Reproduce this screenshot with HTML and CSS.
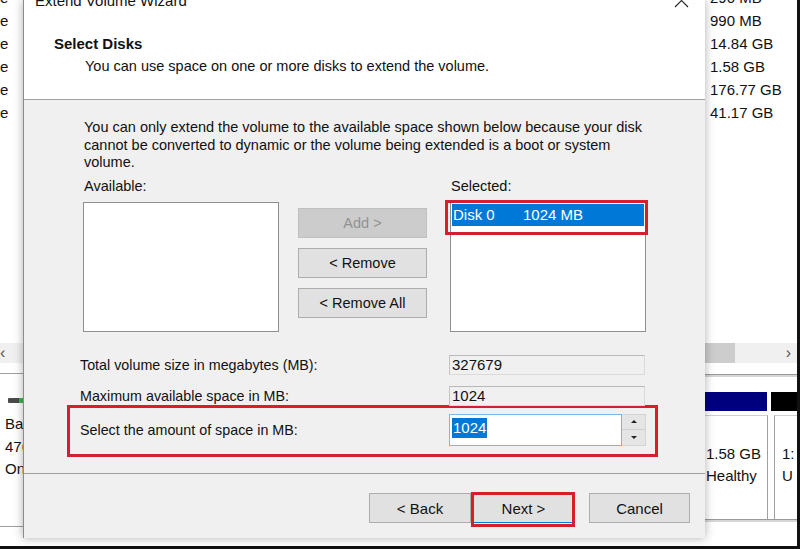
FILE: index.html
```html
<!DOCTYPE html>
<html lang="en">
<head>
    <meta charset="UTF-8">
    <title>Extend Volume Wizard</title>
    <link rel="stylesheet" href="styles.css">
</head>
<body>

<div class="screen">

    <!-- Disk Management, left edge peeking out behind the wizard -->
    <div class="mgmt mgmt-left">
        <div class="vol-col">
            <span>e</span>
            <span>e</span>
            <span>e</span>
            <span>e</span>
            <span>e</span>
            <span>e</span>
        </div>
        <div class="hscroll hscroll-left"><span class="arrow">&lsaquo;</span></div>
        <div class="rule"></div>
        <div class="disk-icon"><span></span></div>
        <div class="disk-info">
            <span>Basic</span>
            <span>476.92 GB</span>
            <span>Online</span>
        </div>
        <div class="rule rule-bottom"></div>
    </div>

    <!-- Wizard dialog -->
    <div class="wizard">
        <div class="titlebar">
            <span class="title">Extend Volume Wizard</span>
            <svg class="close" width="15" height="15" viewBox="0 0 15 15">
                <path d="M1 1 L14 14 M14 1 L1 14" stroke="#222" stroke-width="1.1" fill="none"/>
            </svg>
        </div>

        <div class="wiz-head">
            <h1>Select Disks</h1>
            <p>You can use space on one or more disks to extend the volume.</p>
        </div>

        <div class="wiz-body">
            <p class="note">
                You can only extend the volume to the available space shown below because your disk<br>
                cannot be converted to dynamic or the volume being extended is a boot or system<br>
                volume.
            </p>

            <div class="pickers">
                <div class="picker">
                    <div class="picker-label">Available:</div>
                    <div class="listbox"></div>
                </div>
                <div class="move-buttons">
                    <button class="btn" disabled>Add &gt;</button>
                    <button class="btn">&lt; Remove</button>
                    <button class="btn">&lt; Remove All</button>
                </div>
                <div class="picker picker-selected">
                    <div class="picker-label">Selected:</div>
                    <div class="listbox">
                        <div class="list-item">
                            <span class="disk-name">Disk 0</span>
                            <span>1024 MB</span>
                        </div>
                    </div>
                    <div class="callout callout-disk"></div>
                </div>
            </div>

            <div class="field-rows">
                <div class="field-row">
                    <label>Total volume size in megabytes (MB):</label>
                    <div class="field">327679</div>
                </div>
                <div class="field-row">
                    <label>Maximum available space in MB:</label>
                    <div class="field">1024</div>
                </div>
                <div class="field-row field-row-marked">
                    <label>Select the amount of space in MB:</label>
                    <div class="spinner">
                        <div class="spin-input"><span class="sel-text">1024</span></div>
                        <div class="spin-buttons">
                            <div class="spin-btn spin-up"></div>
                            <div class="spin-btn spin-down"></div>
                        </div>
                    </div>
                </div>
            </div>
        </div>

        <div class="wiz-foot">
            <button class="btn btn-back">&lt; Back</button>
            <div class="next-wrap">
                <button class="btn btn-default">Next &gt;</button>
                <div class="callout callout-next"></div>
            </div>
            <button class="btn btn-cancel">Cancel</button>
        </div>
    </div>

    <!-- Disk Management, right edge -->
    <div class="mgmt mgmt-right">
        <div class="size-col">
            <span>290 MB</span>
            <span>990 MB</span>
            <span>14.84 GB</span>
            <span>1.58 GB</span>
            <span>176.77 GB</span>
            <span>41.17 GB</span>
        </div>
        <div class="hscroll hscroll-right">
            <span class="thumb"></span>
            <span class="arrow">&rsaquo;</span>
        </div>
        <div class="rule rule-double"></div>
        <div class="part-bars">
            <span class="bar-primary"></span>
            <span class="bar-unalloc"></span>
        </div>
        <div class="parts">
            <div class="part part-a">
                <span>1.58 GB</span>
                <span>Healthy</span>
            </div>
            <div class="part part-b">
                <span>1:</span>
                <span>U</span>
            </div>
        </div>
        <div class="rule rule-double"></div>
    </div>

</div>

</body>
</html>
```

FILE: styles.css
```css
* {
    box-sizing: border-box;
}
body {
    margin: 0;
    font-family: 'Liberation Sans', Arial, sans-serif;
    color: #111;
}
.screen {
    width: 800px;
    height: 549px;
    display: grid;
    grid-template-columns: 23px 682px 1fr;
    background: #fff;
    border-right: 3px solid #111;
    border-bottom: 3px solid #111;
    overflow: hidden;
}

/* background window */
.mgmt {
    height: 546px;
    overflow: hidden;
    font-size: 15px;
    display: flex;
    flex-direction: column;
    white-space: nowrap;
}
.vol-col, .size-col {
    display: flex;
    flex-direction: column;
    margin-top: -14px;
    line-height: 23px;
}
.size-col {
    padding-left: 5px;
}
.hscroll {
    height: 20px;
    margin-top: 219px;
    display: flex;
    align-items: center;
    background: #f0f0f0;
}
.hscroll .arrow {
    font-size: 16px;
    color: #555;
    line-height: 20px;
}
.hscroll-right {
    justify-content: space-between;
    padding-right: 6px;
}
.hscroll-right .thumb {
    width: 30px;
    height: 20px;
    background: #cdcdcd;
}
.rule {
    height: 1px;
    background: #a0a0a0;
    margin-top: 10px;
}
.rule-double {
    height: 3px;
    background: #d6d6d6;
    border-top: 1px solid #9a9a9a;
}
.disk-icon {
    margin: 24px 0 0 8px;
    width: 15px;
    height: 5px;
    background: #4a4a4a;
    border-radius: 1px;
}
.disk-icon span {
    display: block;
    width: 4px;
    height: 5px;
    margin-left: 11px;
    background: #3bb54a;
}
.disk-info {
    display: flex;
    flex-direction: column;
    line-height: 22.5px;
    margin-top: 10px;
    padding-left: 5px;
}
.rule-bottom {
    margin-top: 45px;
}
.mgmt-right .rule-double {
    margin-top: 11px;
}
.part-bars {
    display: flex;
    gap: 4px;
    height: 19px;
    margin-top: 15px;
}
.bar-primary {
    width: 62px;
    background: #00007f;
}
.bar-unalloc {
    flex: 1;
    background: #000;
}
.parts {
    display: flex;
    gap: 6px;
    height: 108px;
}
.part {
    display: flex;
    flex-direction: column;
    justify-content: center;
    line-height: 22px;
    border-top: 1px solid #d0d0d0;
    margin-top: 4px;
    padding-bottom: 6px;
}
.part-a {
    width: 63px;
    padding-left: 1px;
    border-right: 1px solid #a0a0a0;
}
.part-b {
    flex: 1;
    padding-left: 7px;
    border-left: 1px solid #a0a0a0;
}
.parts + .rule-double {
    margin-top: 0;
}

/* wizard dialog */
.wizard {
    position: relative;
    z-index: 2;
    height: 538px;
    display: flex;
    flex-direction: column;
    background: #fff;
    border-left: 1px solid #8c8c8c;
    box-shadow: 0 0 9px rgba(0, 0, 0, 0.32);
    font-size: 14.5px;
}
.titlebar {
    height: 10px;
    display: flex;
    justify-content: space-between;
    align-items: flex-start;
    overflow: hidden;
    padding: 0 16px 0 11px;
}
.title {
    font-size: 15px;
    line-height: 18px;
    margin-top: -8px;
}
.close {
    margin-top: -7px;
}
.wiz-head {
    height: 90px;
    padding-top: 25px;
    border-bottom: 1px solid #a0a0a0;
}
.wiz-head h1 {
    margin: 0 0 4px 30px;
    font-size: 15px;
    line-height: 18px;
    font-weight: bold;
}
.wiz-head p {
    margin: 0 0 0 61px;
    font-size: 14.5px;
    line-height: 18px;
}
.wiz-body {
    flex: 1;
    background: #f0f0f0;
    padding-top: 19px;
}
.note {
    margin: 0 0 0 60px;
    font-size: 14.5px;
    line-height: 17.5px;
}
.pickers {
    display: flex;
    margin: 6px 0 0 59px;
}
.picker {
    position: relative;
    width: 196px;
}
.picker-label {
    line-height: 17px;
    padding-left: 1px;
}
.listbox {
    height: 130px;
    margin-top: 7px;
    background: #fff;
    border: 1px solid #8f8f8f;
    padding: 1px;
}
.list-item {
    display: flex;
    height: 22px;
    align-items: center;
    background: #0078d7;
    color: #fff;
    font-size: 15px;
    padding-left: 1px;
}
.disk-name {
    width: 70px;
}
.move-buttons {
    display: flex;
    flex-direction: column;
    gap: 10px;
    width: 129px;
    margin: 30px 23px 0 19px;
}
.btn {
    height: 30px;
    font-family: inherit;
    font-size: 14.5px;
    color: #111;
    background: #e1e1e1;
    border: 1px solid #adadad;
    padding: 0;
}
.btn:disabled {
    background: #cccccc;
    border-color: #bfbfbf;
    color: #929292;
}
.callout {
    position: absolute;
    border: 3px solid #d71f2b;
}
.callout-disk {
    left: -5px;
    right: -2px;
    top: 22px;
    height: 35px;
}

.field-rows {
    margin: 23px 0 0 56px;
}
.field-row {
    display: flex;
    align-items: center;
    margin-bottom: 11px;
}
.field-row label {
    width: 369px;
    font-size: 14.3px;
}
.field {
    width: 196px;
    height: 20px;
    line-height: 18px;
    font-size: 15px;
    padding-left: 2px;
    border: 1px solid #dadada;
    border-top-color: #b9b9b9;
    border-left-color: #c4c4c4;
}
.field-row-marked {
    margin: -12px 0 0 -13px;
    width: 591px;
    padding: 6px 9px 8px 10px;
    border: 3px solid #d71f2b;
}
.spinner {
    display: flex;
    width: 197px;
    height: 32px;
}
.spin-input {
    flex: 1;
    background: #fff;
    border: 1px solid #7eb4ea;
    padding: 3px 0 0 2px;
}
.sel-text {
    display: inline-block;
    background: #0078d7;
    color: #fff;
    font-size: 15px;
    line-height: 20px;
    padding: 0 1px;
}
.spin-buttons {
    width: 24px;
    display: flex;
    flex-direction: column;
    border: 1px solid #d4d4d4;
    border-left: 0;
}
.spin-btn {
    flex: 1;
    background: #e5e5e5;
    display: flex;
    align-items: center;
    justify-content: center;
}
.spin-up {
    border-bottom: 1px solid #d0d0d0;
}
.spin-btn::before {
    content: '';
    border-left: 3px solid transparent;
    border-right: 3px solid transparent;
}
.spin-up::before {
    border-bottom: 3px solid #222;
}
.spin-down::before {
    border-top: 3px solid #222;
}

.wiz-foot {
    height: 65px;
    display: flex;
    justify-content: flex-end;
    align-items: flex-start;
    padding: 19px 15px 0 0;
    background: #f0f0f0;
    border-top: 1px solid #a0a0a0;
}
.wiz-foot .btn {
    font-size: 15px;
}
.btn-back {
    width: 102px;
    margin-right: 2px;
}
.next-wrap {
    position: relative;
    margin-right: 15px;
}
.btn-default {
    width: 101px;
    border-color: #0078d7;
}
.callout-next {
    top: -1px;
    bottom: -4px;
    left: -2px;
    right: -1px;
}
.btn-cancel {
    width: 101px;
}
```
